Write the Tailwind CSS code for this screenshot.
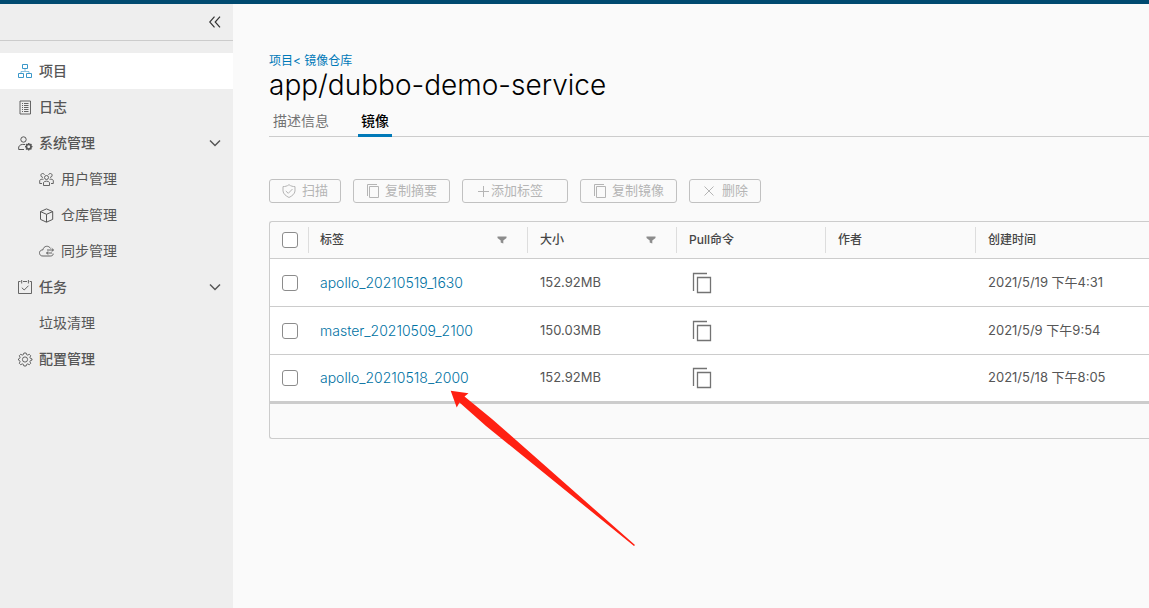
<!DOCTYPE html>
<html lang="zh-CN">
<head>
<meta charset="utf-8">
<meta name="viewport" content="width=device-width, initial-scale=1">
<title>app/dubbo-demo-service</title>
<script src="https://cdn.jsdelivr.net/npm/@tailwindcss/browser@4"></script>
</head>
<body class="relative flex min-h-screen flex-col overflow-x-hidden bg-[#fafafa] font-['Inter','Noto_Sans_CJK_SC',sans-serif] text-[13px] text-[#565656]">
<svg class="hidden" aria-hidden="true">
  <symbol id="copy" viewBox="0 0 20 22"><path d="M1.500 19V1.500H15M5.500 5.500H18.500V20.500H5.500Z" fill="none" stroke="currentColor" stroke-width="1.300"/></symbol>
  <symbol id="chevron" viewBox="0 0 12 8"><path d="M1 1.500L6 6.500L11 1.500" fill="none" stroke="currentColor" stroke-width="1.500"/></symbol>
  <symbol id="filter" viewBox="0 0 10 8"><path d="M0.500 0.500H9.500V2L6.300 4.500V7.500L3.700 6.500V4.500L0.500 2Z" fill="currentColor"/></symbol>
</svg>
<header class="h-1 bg-[#004a70]"></header>
<div class="flex flex-1">
  <aside class="w-[233px] shrink-0 bg-[#eee]">
    <div class="flex h-[37px] items-center justify-end border-b border-[#ccc] pr-3">
      <button type="button" aria-label="收起" class="text-[#333]"><svg class="block h-3 w-3" viewBox="0 0 12 12" fill="none" stroke="currentColor" stroke-width="1.200"><path d="M5.500 0.700L0.700 6L5.500 11.300M11 0.700L6.200 6L11 11.300"/></svg></button>
    </div>
    <nav class="mt-3 text-sm">
      <a href="#" class="flex h-9 items-center gap-1.5 bg-white pl-[18px] font-medium">
        <svg class="h-[15px] w-[15px] text-[#3a97c9]" viewBox="0 0 15 15" fill="none" stroke="currentColor"><path d="M4.500 0.500H9.500V4.500H4.500ZM0.500 9.500H5.500V13.500H0.500ZM8.500 9.500H13.500V13.500H8.500Z"/><path d="M7 4.500V7M3 9.500V7.500H11V9.500" opacity="0.600"/></svg>项目</a>
      <a href="#" class="flex h-9 items-center gap-1.5 pl-[18px] font-medium">
        <svg class="h-[15px] w-[15px]" viewBox="0 0 15 15" fill="none" stroke="currentColor" stroke-width="0.900"><path d="M2 1H12.500V14H2Z"/><path d="M4 3.500H5M6 3.500H10.500M4 5.500H5M6 5.500H10.500M4 7.500H5M6 7.500H10.500M4 9.500H5M6 9.500H10.500M4 11.500H5M6 11.500H10.500"/></svg>日志</a>
      <button type="button" aria-expanded="true" class="flex h-9 w-full items-center gap-1.5 pl-[18px] pr-3 text-left font-medium">
        <svg class="h-[15px] w-[15px]" viewBox="0 0 15 15" fill="none" stroke="currentColor"><circle cx="5.500" cy="3.500" r="2.700"/><path d="M6 13.500H0.700V11C1.500 9 3.500 8 7 8.500"/><circle cx="10.700" cy="10.700" r="2.300" stroke-width="1.700"/><path d="M10.700 7V8.500M10.700 13V14.500M7 10.700H8.500M13 10.700H14.500M8 8L9 9M12.500 12.500L13.400 13.400M13.400 8L12.500 9M8 13.400L9 12.500" stroke-width="1.300"/></svg><span class="flex-1">系统管理</span><svg class="h-2 w-3"><use href="#chevron"/></svg></button>
      <a href="#" class="flex h-9 items-center gap-[7px] pl-[39px]">
        <svg class="h-[15px] w-[15px]" viewBox="0 0 15 15" fill="none" stroke="currentColor" stroke-width="0.900"><circle cx="7.500" cy="5.500" r="2"/><path d="M4.500 13.500V10.500C5.500 8.700 9.500 8.700 10.500 10.500V13.500ZM4 5.500C1 5 1.500 1.500 3.500 1.500C4.500 1.500 5.300 2 5.500 2.700M11 5.500C14 5 13.500 1.500 11.500 1.500C10.500 1.500 9.700 2 9.500 2.700M3 11.500H0.700V8.500C1.300 7.300 2.500 7 4.500 7.300M12 11.500H14.300V8.500C13.700 7.300 12.500 7 10.500 7.300"/></svg>用户管理</a>
      <a href="#" class="flex h-9 items-center gap-[7px] pl-[39px]">
        <svg class="h-[15px] w-[15px]" viewBox="0 0 15 15" fill="none" stroke="currentColor"><path d="M7.500 0.900L13.700 3.600V11.400L7.500 14.200L1.500 11.400V3.600ZM1.500 3.600L7.500 6.300L13.700 3.600M7.500 6.300V14"/></svg>仓库管理</a>
      <a href="#" class="flex h-9 items-center gap-[7px] pl-[39px]">
        <svg class="h-[15px] w-[15px]" viewBox="0 0 15 15" fill="none" stroke="currentColor"><path d="M11.500 4.500C10 1.200 4.500 1.500 4 5.800C0.500 6 -0.500 9 1.500 11.300C2 11.900 3 12 4 12H11.500C13.500 12 14.500 10.700 14 9.500M8 6H14.500M12.700 4.300L14.500 6L12.700 7.500M13 9H7.500M9.300 7.500L7.500 9L9.300 10.500" stroke-width="0.900"/></svg>同步管理</a>
      <button type="button" aria-expanded="true" class="flex h-9 w-full items-center gap-1.5 pl-[18px] pr-3 text-left font-medium">
        <svg class="h-[15px] w-[15px]" viewBox="0 0 15 15" fill="none" stroke="currentColor" stroke-width="0.900"><path d="M2.500 1.500H0.500V13.500H13.500V1.500H11.700M5 1.500H9M3.700 0V3.500M10.400 0V3.500M3.800 7.700L6.200 10L10.500 5.700"/></svg><span class="flex-1">任务</span><svg class="h-2 w-3"><use href="#chevron"/></svg></button>
      <a href="#" class="flex h-9 items-center pl-[39px]">垃圾清理</a>
      <a href="#" class="flex h-9 items-center gap-1.5 pl-[18px] font-medium">
        <svg class="h-[15px] w-[15px]" viewBox="0 0 15 15" fill="none" stroke="currentColor" stroke-width="0.900" stroke-linejoin="round"><path d="M5.900 1H8.100L8.700 2.700L9.700 3.100L11.300 2.300L12.700 3.700L11.900 5.300L12.300 6.300L14 6.900V8.100L12.300 8.700L11.900 9.700L12.700 11.300L11.300 12.700L9.700 11.900L8.700 12.300L8.100 14H5.900L5.300 12.300L4.300 11.900L2.700 12.700L1.300 11.300L2.100 9.700L1.700 8.700L0.500 8.100V6.900L1.700 6.300L2.100 5.300L1.300 3.700L2.700 2.300L4.300 3.100L5.300 2.700Z"/><circle cx="7" cy="7.500" r="2.600"/></svg>配置管理</a>
    </nav>
  </aside>
  <main class="min-w-0 flex-1 pt-[49px] pl-9">
    <div class="text-xs leading-4 text-[#0079b8]"><a href="#">项目</a><a href="#">&lt; 镜像仓库</a></div>
    <h1 class="text-[28px] leading-8 font-light text-black">app/dubbo-demo-service</h1>
    <div role="tablist" class="mt-1 flex h-8 gap-[25px] border-b border-[#ccc] text-sm">
      <button type="button" role="tab" aria-selected="false" class="px-1 text-[#737373]">描述信息</button>
      <button type="button" role="tab" aria-selected="true" class="-mb-px border-b-3 border-[#0079b8] px-[3px] pt-0.5 font-medium text-black">镜像</button>
    </div>
    <div class="mt-[42px] flex gap-3 text-[#b5b5b5]">
      <button type="button" disabled class="flex h-6 items-center gap-1.5 rounded-[3px] border border-[#c1c1c1] px-3"><svg class="h-[14px] w-[14px]" viewBox="0 0 14 14" fill="none" stroke="currentColor"><path d="M7 0.700C5 2.200 3 2.600 1 2.600V7C1.300 10 4 12 7 13.500C10 12 12.700 10 13 7V2.600C11 2.600 9 2.200 7 0.700ZM3.800 7L6.300 9.300L10.500 5"/></svg>扫描</button>
      <button type="button" disabled class="flex h-6 items-center gap-[5px] rounded-[3px] border border-[#c1c1c1] px-3"><svg class="h-[14px] w-[14px]" viewBox="0 0 14 14" fill="none" stroke="currentColor"><path d="M1.500 12V0.500H11M3.500 2.500H12.500V13.500H3.500Z"/></svg>复制摘要</button>
      <button type="button" disabled class="flex h-6 items-center gap-px rounded-[3px] border border-[#c1c1c1] pr-6 pl-[14px]"><svg class="h-[13px] w-[13px]" viewBox="0 0 13 13" fill="none" stroke="currentColor"><path d="M6.500 1V12M1 6.500H12"/></svg>添加标签</button>
      <button type="button" disabled class="flex h-6 items-center gap-[5px] rounded-[3px] border border-[#c1c1c1] px-3"><svg class="h-[14px] w-[14px]" viewBox="0 0 14 14" fill="none" stroke="currentColor"><path d="M1.500 12V0.500H11M3.500 2.500H12.500V13.500H3.500Z"/></svg>复制镜像</button>
      <button type="button" disabled class="flex h-6 items-center gap-1.5 rounded-[3px] border border-[#c1c1c1] px-3"><svg class="h-[14px] w-[14px]" viewBox="0 0 14 14" fill="none" stroke="currentColor"><path d="M2.500 2.500L11.500 11.500M11.500 2.500L2.500 11.500"/></svg>删除</button>
    </div>
    <div class="mt-[18px] rounded-l-[3px] border border-r-0 border-[#ccc]">
      <table class="w-full table-fixed border-collapse text-left">
        <thead class="text-xs text-[#454545]">
          <tr class="h-9 border-b border-[#ccc]">
            <th class="w-[38px] p-0"><input type="checkbox" aria-label="全选" class="ml-3 block h-4 w-4 appearance-none rounded-[3px] border border-[#8c8c8c] bg-white"></th>
            <th class="w-[219px] p-0 font-medium"><div class="flex h-[26px] items-center justify-between border-l border-[#ddd] pr-5 pl-[11px]">标签<button type="button" aria-label="筛选标签" class="text-[#8c8c8c]"><svg class="block h-2 w-[10px]"><use href="#filter"/></svg></button></div></th>
            <th class="w-[149px] p-0 font-medium"><div class="flex h-[26px] items-center justify-between border-l border-[#ddd] pr-5 pl-3">大小<button type="button" aria-label="筛选大小" class="text-[#8c8c8c]"><svg class="block h-2 w-[10px]"><use href="#filter"/></svg></button></div></th>
            <th class="w-[149px] p-0 font-medium"><div class="flex h-[26px] items-center border-l border-[#ddd] pl-3">Pull命令</div></th>
            <th class="w-[150px] p-0 font-medium"><div class="flex h-[26px] items-center border-l border-[#ddd] pl-3">作者</div></th>
            <th class="p-0 font-medium"><div class="flex h-[26px] items-center border-l border-[#ddd] pl-3">创建时间</div></th>
          </tr>
        </thead>
        <tbody class="bg-white">
          <tr class="h-12 border-b border-[#ccc]">
            <td class="px-0 pt-0.5 pb-0"><input type="checkbox" aria-label="apollo_20210519_1630" class="ml-3 block h-4 w-4 appearance-none rounded-[3px] border border-[#8c8c8c]"></td>
            <td class="pt-0.5 pr-0 pb-0 pl-3"><a href="#" class="text-sm font-light text-[#0072a3]">apollo_20210519_1630</a></td>
            <td class="pt-0.5 pr-0 pb-0 pl-[13px]">152.92MB</td>
            <td class="pt-0.5 pr-0 pb-0 pl-4"><button type="button" aria-label="复制" class="block text-[#737373]"><svg class="block h-[22px] w-5"><use href="#copy"/></svg></button></td>
            <td></td>
            <td class="pt-0.5 pr-0 pb-0 pl-[13px]">2021/5/19 下午4:31</td>
          </tr>
          <tr class="h-12 border-b border-[#ccc]">
            <td class="px-0 pt-0.5 pb-0"><input type="checkbox" aria-label="master_20210509_2100" class="ml-3 block h-4 w-4 appearance-none rounded-[3px] border border-[#8c8c8c]"></td>
            <td class="pt-0.5 pr-0 pb-0 pl-3"><a href="#" class="text-sm font-light text-[#0072a3]">master_20210509_2100</a></td>
            <td class="pt-0.5 pr-0 pb-0 pl-[13px]">150.03MB</td>
            <td class="pt-0.5 pr-0 pb-0 pl-4"><button type="button" aria-label="复制" class="block text-[#737373]"><svg class="block h-[22px] w-5"><use href="#copy"/></svg></button></td>
            <td></td>
            <td class="pt-0.5 pr-0 pb-0 pl-[13px]">2021/5/9 下午9:54</td>
          </tr>
          <tr class="h-[47px]">
            <td class="p-0"><input type="checkbox" aria-label="apollo_20210518_2000" class="ml-3 block h-4 w-4 appearance-none rounded-[3px] border border-[#8c8c8c]"></td>
            <td class="py-0 pr-0 pl-3"><a href="#" class="text-sm font-light text-[#0072a3]">apollo_20210518_2000</a></td>
            <td class="py-0 pr-0 pl-[13px]">152.92MB</td>
            <td class="py-0 pr-0 pl-4"><button type="button" aria-label="复制" class="block text-[#737373]"><svg class="block h-[22px] w-5"><use href="#copy"/></svg></button></td>
            <td></td>
            <td class="py-0 pr-0 pl-[13px]">2021/5/18 下午8:05</td>
          </tr>
        </tbody>
      </table>
      <div class="h-[37px] border-t-3 border-[#ccc]"></div>
    </div>
  </main>
</div>
<svg class="pointer-events-none absolute top-[390px] left-[450px] h-[157px] w-[186px]" viewBox="0 0 186 157" aria-hidden="true"><path d="M0.700 0.700L18.500 3.200L14.500 6.500L42 29L185 155L184 156L36 36L9.500 12.500L6.700 17.500Z" fill="#ff2012"/></svg>
</body>
</html>
